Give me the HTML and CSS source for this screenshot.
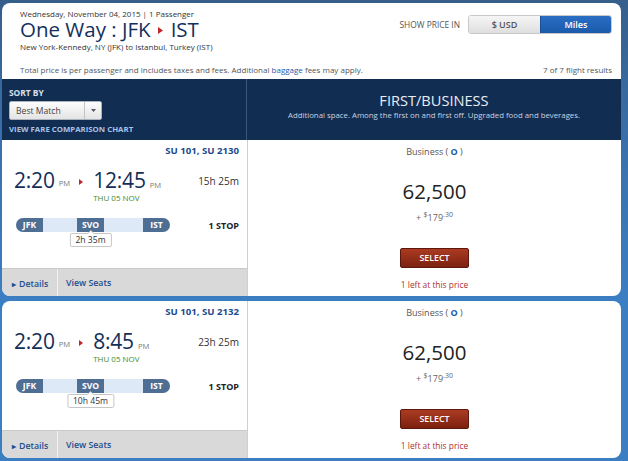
FILE: index.html
```html
<!DOCTYPE html>
<html>
<head>
<meta charset="utf-8">
<link rel="stylesheet" href="styles.css">
</head>
<body>
<div class="page">
  <header class="summary">
    <div class="summary-left">
      <div class="date-line">Wednesday, November 04, 2015 | 1 Passenger</div>
      <h1 class="trip-title">One Way : JFK <svg class="title-arrow" width="5" height="7" viewBox="0 0 5 7"><polygon points="0,0 5,3.5 0,7" fill="#c0262d"/></svg> IST</h1>
      <div class="route-line">New York-Kennedy, NY (JFK) to Istanbul, Turkey (IST)</div>
    </div>
    <div class="price-toggle">
      <span class="toggle-label">SHOW PRICE IN</span>
      <div class="toggle">
        <span class="toggle-btn">$ USD</span>
        <span class="toggle-btn active">Miles</span>
      </div>
    </div>
    <div class="summary-foot">
      <span>Total price is per passenger and includes taxes and fees. Additional <a class="link">baggage</a> fees may apply.</span>
      <span>7 of 7 flight results</span>
    </div>
  </header>

  <section class="band">
    <div class="band-left">
      <div class="sort-label">SORT BY</div>
      <div class="select-box"><span class="select-text">Best Match</span><span class="select-caret"><svg width="5" height="3" viewBox="0 0 5 3"><polygon points="0,0 5,0 2.5,3" fill="#556"/></svg></span></div>
      <a class="compare-link">VIEW FARE COMPARISON CHART</a>
    </div>
    <div class="band-right">
      <div class="cabin-title">FIRST/BUSINESS</div>
      <div class="cabin-desc">Additional space. Among the first on and first off. Upgraded food and beverages.</div>
    </div>
  </section>

  <article class="card first">
    <div class="flight">
      <div class="flight-body">
        <div class="flight-no">SU 101, SU 2130</div>
        <div class="times-row">
          <div class="times">
            <span class="time">2:20</span><span class="ampm">PM</span>
            <svg class="time-arrow" width="4" height="6" viewBox="0 0 4 6"><polygon points="0,0 4,3 0,6" fill="#c0262d"/></svg>
            <div class="arrive">
              <div class="arr-time"><span class="time">12:45</span><span class="ampm">PM</span></div>
              <div class="arr-date">THU 05 NOV</div>
            </div>
          </div>
          <div class="duration">15h 25m</div>
        </div>
        <div class="route-row">
          <div class="route-bar">
            <span class="pill pill-start">JFK</span>
            <span class="pill pill-mid">SVO<span class="layover">2h 35m</span></span>
            <span class="pill pill-end">IST</span>
          </div>
          <div class="stops">1 STOP</div>
        </div>
      </div>
      <div class="flight-foot">
        <a class="foot-link details"><span class="tri">&#9656;</span> Details</a>
        <a class="foot-link seats">View Seats</a>
      </div>
    </div>
    <div class="fare">
      <div class="fare-class">Business ( <b>O</b> )</div>
      <div class="miles">62,500</div>
      <div class="taxes">+ <sup>$</sup>179<sup>.30</sup></div>
      <button class="select-btn">SELECT</button>
      <div class="seats-left">1 left at this price</div>
    </div>
  </article>

  <article class="card second">
    <div class="flight">
      <div class="flight-body">
        <div class="flight-no">SU 101, SU 2132</div>
        <div class="times-row">
          <div class="times">
            <span class="time">2:20</span><span class="ampm">PM</span>
            <svg class="time-arrow" width="4" height="6" viewBox="0 0 4 6"><polygon points="0,0 4,3 0,6" fill="#c0262d"/></svg>
            <div class="arrive">
              <div class="arr-time"><span class="time">8:45</span><span class="ampm">PM</span></div>
              <div class="arr-date">THU 05 NOV</div>
            </div>
          </div>
          <div class="duration">23h 25m</div>
        </div>
        <div class="route-row">
          <div class="route-bar">
            <span class="pill pill-start">JFK</span>
            <span class="pill pill-mid">SVO<span class="layover">10h 45m</span></span>
            <span class="pill pill-end">IST</span>
          </div>
          <div class="stops">1 STOP</div>
        </div>
      </div>
      <div class="flight-foot">
        <a class="foot-link details"><span class="tri">&#9656;</span> Details</a>
        <a class="foot-link seats">View Seats</a>
      </div>
    </div>
    <div class="fare">
      <div class="fare-class">Business ( <b>O</b> )</div>
      <div class="miles">62,500</div>
      <div class="taxes">+ <sup>$</sup>179<sup>.30</sup></div>
      <button class="select-btn">SELECT</button>
      <div class="seats-left">1 left at this price</div>
    </div>
  </article>
</div>
</body>
</html>
```

FILE: styles.css
```css
* { box-sizing: border-box; }
html, body { margin: 0; height: 100%; }
body {
  font-family: "Open Sans", "Noto Sans", sans-serif;
  background: linear-gradient(180deg, #365e8b 0px, #3a72ae 160px, #3b7ec2 300px, #3b7ec2 100%);
  color: #333;
  overflow: hidden;
}
.page { padding: 3px 7px 0 2px; }

/* summary header */
.summary {
  background: #fff;
  border-radius: 8px 8px 0 0;
  height: 76px;
  padding: 6px 9px 0 18px;
  display: grid;
  grid-template-columns: 1fr auto;
  grid-template-rows: 55px auto;
}
.date-line { font-size: 8px; line-height: 10px; color: #333; }
.trip-title {
  margin: 0;
  font-weight: 400;
  font-size: 20.5px;
  line-height: 20px;
  color: #14305c;
  display: flex;
  align-items: center;
}
.title-arrow { margin: 3px 8px 0 7px; }
.route-line { font-size: 8px; line-height: 11px; color: #333; margin-top: 2px; }
.price-toggle { display: flex; align-items: center; gap: 8px; margin-top: 6px; align-self: start; }
.toggle-label { font-size: 8.4px; color: #555; }
.toggle { display: flex; height: 19px; border-radius: 3px; overflow: hidden; border: 1px solid #c9c9c9; }
.toggle-btn {
  width: 71px; display: flex; align-items: center; justify-content: center;
  font-size: 9px; font-weight: 600; color: #555;
  background: linear-gradient(#f6f6f6, #dedede);
}
.toggle-btn.active { background: linear-gradient(#2a6ec4, #1a5aaa); color: #fff; border-left: 1px solid #1a4f96; }
.summary-foot {
  grid-column: 1 / 3;
  display: flex; justify-content: space-between;
  font-size: 8px; line-height: 12px; color: #555;
}
.link { color: #1a5aab; }

/* band */
.band {
  background: #122d52;
  height: 61px;
  display: grid;
  grid-template-columns: 245px 1fr;
}
.band-left { padding: 8px 0 0 7px; border-right: 1px solid #3d5676; }
.sort-label { font-size: 8.4px; font-weight: 700; color: #d6e0ec; line-height: 11px; }
.select-box {
  margin-top: 3px;
  width: 93px; height: 19px;
  display: flex;
  background: linear-gradient(#fdfdfd, #e4e4e4);
  border: 1px solid #aab2bd;
  border-radius: 2px;
}
.select-text { flex: 1; font-size: 8.6px; color: #444; padding-left: 6px; display: flex; align-items: center; }
.select-caret { width: 17px; border-left: 1px solid #c4c4c4; display: flex; align-items: center; justify-content: center; }
.compare-link { display: block; margin-top: 4px; font-size: 7.8px; font-weight: 700; color: #a8c3e6; line-height: 11px; }
.band-right { text-align: center; padding-top: 13px; }
.cabin-title { font-size: 14.6px; line-height: 17px; color: #e9eef5; }
.cabin-desc { font-size: 7.8px; line-height: 11px; color: #c8d3e2; margin-top: 1px; }

/* cards */
.card {
  background: #fff;
  display: grid;
  grid-template-columns: 246px 1fr;
  height: 156px;
  overflow: hidden;
}
.card.first { border-radius: 0 0 8px 8px; }
.card.second { border-radius: 8px; margin-top: 5px; height: 157px; }
.flight { display: flex; flex-direction: column; border-right: 1px solid #cfcfcf; }
.flight-body { padding: 4px 8px 0 12px; }
.flight-no { text-align: right; font-size: 9.6px; font-weight: 700; color: #1d4a8d; line-height: 13px; }
.times-row { display: flex; justify-content: space-between; margin-top: 11px; }
.times { display: flex; align-items: flex-start; }
.time { font-size: 21px; line-height: 24px; color: #132f57; letter-spacing: -0.2px; }
.ampm { font-size: 7.6px; color: #7a7a7a; margin-left: 4px; }
.times > .ampm { line-height: 24px; margin-top: 3px; }
.time-arrow { margin: 11px 10px 0 9px; }
.arr-time { height: 24px; }
.arr-date { font-size: 8px; line-height: 11px; color: #3f8a2a; }
.duration { font-size: 10px; line-height: 13px; color: #333; margin-top: 7px; }
.route-row { display: flex; justify-content: space-between; align-items: center; margin-top: 15px; }
.route-bar {
  width: 154px; height: 14px;
  margin-left: 2px;
  background: #dde9f6;
  border-radius: 7px;
  display: flex;
}
.pill {
  width: 27px; height: 14px;
  background: #4e6e94;
  color: #fff;
  font-size: 8.6px; font-weight: 700;
  display: flex; align-items: center; justify-content: center;
}
.pill-start { border-radius: 7px 0 0 7px; }
.pill-mid { margin-left: 34px; position: relative; }
.pill-end { margin-left: auto; border-radius: 0 7px 7px 0; }
.layover {
  position: absolute;
  top: 15px; left: 50%;
  transform: translateX(-50%);
  background: #fff;
  border: 1px solid #c6c6c6;
  border-radius: 2px;
  color: #333;
  font-weight: 400;
  font-size: 8.6px;
  line-height: 12px;
  padding: 0 5px;
  white-space: nowrap;
}
.layover::before {
  content: "";
  position: absolute;
  top: -4px; left: 50%;
  margin-left: -4px;
  border-left: 4px solid transparent;
  border-right: 4px solid transparent;
  border-bottom: 4px solid #c6c6c6;
}
.layover::after {
  content: "";
  position: absolute;
  top: -3px; left: 50%;
  margin-left: -3px;
  border-left: 3px solid transparent;
  border-right: 3px solid transparent;
  border-bottom: 3px solid #fff;
}
.stops { font-size: 9px; font-weight: 700; color: #222; }
.flight-foot {
  margin-top: auto;
  height: 28px;
  background: #d9d9d9;
  border-top: 1px solid #c9c9c9;
  display: flex;
}
.foot-link { font-size: 8.8px; font-weight: 600; color: #1f4e8e; display: flex; align-items: center; }
.details { width: 56px; padding-left: 10px; border-right: 1px solid #f2f2f2; padding-top: 2px; }
.tri { font-size: 8px; margin-right: 3px; }
.seats { padding-left: 8px; }

.fare { display: flex; flex-direction: column; align-items: center; padding-top: 6px; }
.fare-class { font-size: 9px; line-height: 12px; color: #555; }
.fare-class b { color: #1d5aa8; }
.miles { font-size: 20.5px; line-height: 26px; color: #222; margin-top: 20px; }
.taxes { font-size: 9px; line-height: 12px; color: #666; margin-top: 8px; }
.taxes sup { font-size: 7px; vertical-align: 4px; line-height: 0; }
.select-btn {
  margin-top: 24px;
  width: 69px; height: 20px;
  background: linear-gradient(#ab3b22, #7c2110);
  border: 1px solid #5e180b;
  border-radius: 2px;
  color: #fff;
  font-family: inherit;
  font-size: 8.8px; font-weight: 600;
  padding: 0;
}
.seats-left { font-size: 8.4px; line-height: 11px; color: #b0302a; margin-top: 11px; }
```
